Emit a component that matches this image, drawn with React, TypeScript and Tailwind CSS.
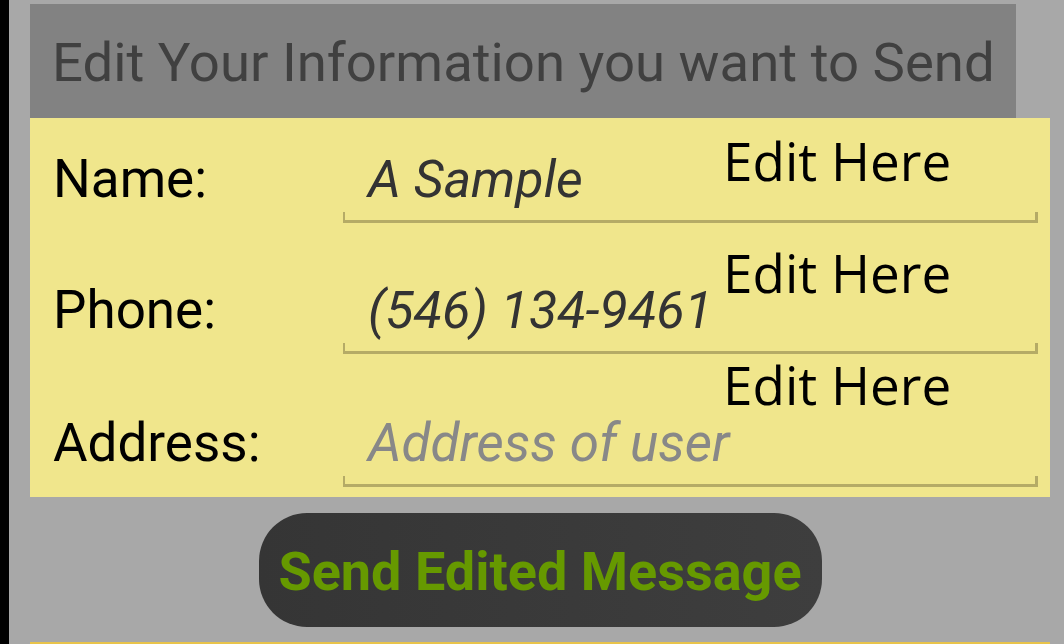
import React from "react";

function Field({ text, muted }: { text: string; muted?: boolean }) {
  return (
    <div className="relative flex-1 h-full flex items-end">
      <div
        className={`pl-[25px] pb-[17px] leading-none italic ${muted ? "text-[#888888] text-[53px]" : "text-[#333333] text-[52px]"}`}
        style={{ fontFamily: "Roboto, sans-serif" }}
      >
        {text}
      </div>
      <div className="absolute left-0 right-0 bottom-0 h-[3px] bg-[#b5ab66]" />
      <div className="absolute left-0 bottom-0 w-[2px] h-[11px] bg-[#b5ab66]" />
      <div className="absolute right-0 bottom-0 w-[3px] h-[11px] bg-[#b5ab66]" />
    </div>
  );
}

function Row({ label, text, muted, h }: { label: string; text: string; muted?: boolean; h: string }) {
  return (
    <div className={`flex items-end ${h}`}>
      <div
        className="w-[313px] pl-[23px] pb-[17px] text-[53px] leading-none text-black"
        style={{ fontFamily: "Roboto, sans-serif" }}
      >
        {label}
      </div>
      <Field text={text} muted={muted} />
    </div>
  );
}

export default function App() {
  return (
    <div className="w-[1064px] h-[644px] flex overflow-hidden" style={{ fontFamily: "Roboto, sans-serif" }}>
      <div className="w-[9px] h-full bg-black" />
      <div className="flex-1 h-full bg-[#a8a8a8] pl-[21px] flex flex-col">
        <div className="mt-[4px] w-[986px] h-[114px] bg-[#828282] flex items-center pl-[22px]">
          <span className="text-[54.5px] leading-none text-[#404040] pt-[2px]">Edit Your Information you want to Send</span>
        </div>
        <div className="relative w-[1020px] h-[380px] bg-[#f0e68c] flex flex-col pr-[12px]">
          <Row label="Name:" text="A Sample" h="h-[105px]" />
          <Row label="Phone:" text="(546) 134-9461" h="h-[131px]" />
          <Row label="Address:" text="Address of user" muted h="h-[133px]" />
          <div
            className="absolute left-[693px] top-[-13px] flex flex-col text-[53px] text-black"
            style={{ fontFamily: "'Open Sans', sans-serif" }}
          >
            <div className="leading-[112px]">Edit Here</div>
            <div className="leading-[112px]">Edit Here</div>
            <div className="leading-[112px]">Edit Here</div>
          </div>
        </div>
        <div className="w-[1020px] flex justify-center mt-[16px]">
          <div className="w-[563px] h-[114px] rounded-[48px] bg-gradient-to-r from-[#353535] to-[#3e3e3e] flex items-center justify-center">
            <span className="text-[54px] font-bold leading-none text-[#669900] pt-[4px]">Send Edited Message</span>
          </div>
        </div>
        <div className="mt-[15px] w-[1020px] h-[2px] bg-[#e8c34a]" />
      </div>
    </div>
  );
}
